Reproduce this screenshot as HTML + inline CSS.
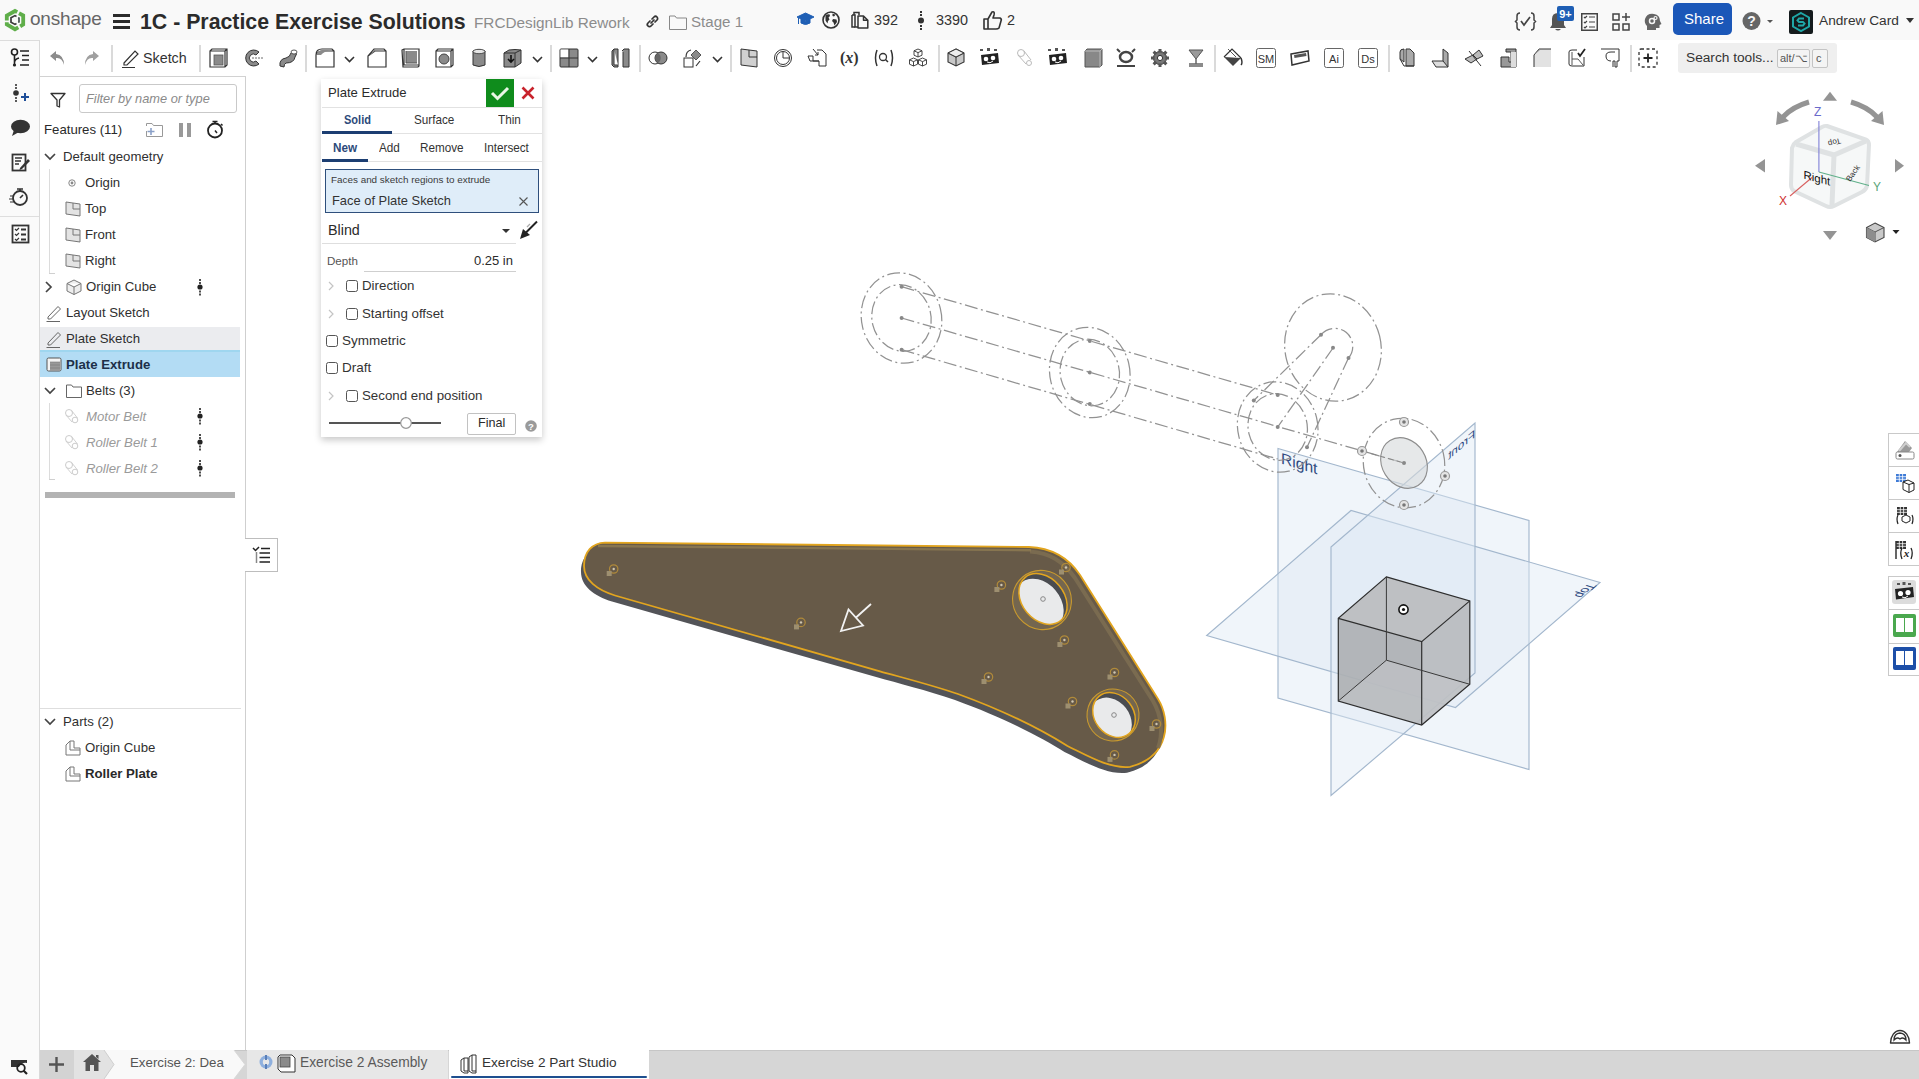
<!DOCTYPE html>
<html><head><meta charset="utf-8">
<style>
*{box-sizing:border-box;margin:0;padding:0}
html,body{width:1919px;height:1079px;overflow:hidden;background:#fff;font-family:"Liberation Sans",sans-serif;color:#333}
.a{position:absolute}
.t{position:absolute;white-space:nowrap;line-height:20px;height:20px}
svg{position:absolute;overflow:visible}
#top{left:0;top:0;width:1919px;height:40px;background:#f9f9f9}
#tb{left:40px;top:40px;width:1879px;height:37px;background:#fff}
#strip{left:0;top:40px;width:40px;height:1039px;background:#fafafa;border-right:1px solid #d9d9d9;border-top:1px solid #dcdcdc}
#panel{left:40px;top:76px;width:206px;height:974px;background:#fff;border-right:1px solid #cfcfcf}
#tabs{left:40px;top:1050px;width:1879px;height:29px;background:#d6d6d6}
.sep{position:absolute;top:47px;width:2px;height:24px;background:#d9d9d9}
.ico{position:absolute}
</style></head><body>
<div id="top" class="a"></div>
<div id="tb" class="a"></div>
<div id="strip" class="a"></div>
<div id="panel" class="a"></div>
<div id="tabs" class="a"></div>


<svg style="left:4px;top:8px" width="22" height="24" viewBox="0 0 22 24"><g fill="none" stroke="#5fae4a" stroke-width="3.8" stroke-linejoin="miter"><path d="M2.8 12.5 V7.5 L11 3 L13.2 4.2"/><path d="M15 5.3 L19.2 7.5 V16.5 L16.2 18.3"/><path d="M14.3 19.4 L11 21.2 L2.8 16.5 V14.3"/></g><path d="M12.5 8.4 L11 7.6 L7 9.8 V14.2 L11 16.4 L12.5 15.6" fill="none" stroke="#3a3a3a" stroke-width="1.7"/><path d="M14.2 9.6 L15 10 V14 L14.2 14.4" fill="none" stroke="#3a4a45" stroke-width="1.6"/></svg>
<div class="t" style="left:30px;top:9px;font-size:19px;color:#666;letter-spacing:-0.2px">onshape</div>
<svg style="left:113px;top:14px" width="17" height="15"><rect y="0" width="17" height="3" fill="#2b2b2b"/><rect y="6" width="17" height="3" fill="#2b2b2b"/><rect y="12" width="17" height="3" fill="#2b2b2b"/></svg>
<div class="t" style="left:140px;top:11px;font-size:21.3px;font-weight:700;color:#2b2b2b;height:22px;line-height:22px">1C - Practice Exercise Solutions</div>
<div class="t" style="left:474px;top:13px;font-size:15.3px;color:#8c8c8c">FRCDesignLib Rework</div>
<svg style="left:645px;top:14px" width="15" height="15" viewBox="0 0 15 15"><path d="M6 9 L9 6 M5 7 L3 9 A2.1 2.1 0 0 0 6 12 L8 10 M7 5 L9 3 A2.1 2.1 0 0 1 12 6 L10 8" fill="none" stroke="#333" stroke-width="1.7" stroke-linecap="round"/></svg>
<svg style="left:669px;top:15px" width="18" height="15" viewBox="0 0 18 15"><path d="M0.5 1 H6 L7.5 3 H17.5 V14.5 H0.5 Z" fill="none" stroke="#888" stroke-width="1"/></svg>
<div class="t" style="left:691px;top:12px;font-size:15.1px;color:#8c8c8c">Stage 1</div>

<svg style="left:797px;top:12px" width="17" height="16" viewBox="0 0 17 16"><path d="M0 5 L8.5 1 L17 5 L8.5 9 Z M4 7 V11 Q8.5 14 13 11 V7 L8.5 9.5 Z M1.5 6 V12" fill="#1f5fb5" stroke="#1f5fb5" stroke-width="1"/></svg>
<svg style="left:822px;top:11px" width="18" height="18" viewBox="0 0 18 18"><circle cx="9" cy="9" r="8" fill="none" stroke="#333" stroke-width="1.6"/><path d="M3.5 4.5 Q5 3 7.5 3.2 L8 5 L6.5 6.5 L7.5 8.5 L6 10 L5.5 12.5 L3.5 9.5 Z" fill="#333"/><path d="M10.5 2.5 L13.5 3.8 L12 5.5 L10.5 5 Z M11 8 L14.5 8.5 L15 11 L12.5 14.5 L11.5 11.5 L10 10 Z" fill="#333"/></svg>
<svg style="left:851px;top:11px" width="18" height="18" viewBox="0 0 18 18"><path d="M1 4 H4 V16 H7 M3 4 V1.5 H8 V4" fill="none" stroke="#333" stroke-width="1.5"/><path d="M7 5 H12.5 L16.8 9.3 V17 H7 Z M12.5 5 V9.3 H16.8" fill="none" stroke="#333" stroke-width="1.5" stroke-linejoin="round"/><path d="M1 4 V16 H4" fill="none" stroke="#333" stroke-width="1.5"/></svg>
<div class="t" style="left:874px;top:10px;font-size:14.4px;color:#333">392</div>
<svg style="left:917px;top:11px" width="8" height="19"><circle cx="4" cy="9.5" r="3" fill="#333"/><rect x="3" y="0" width="2" height="2" fill="#333"/><rect x="3" y="3" width="2" height="2" fill="#333"/><rect x="3" y="14" width="2" height="2" fill="#333"/><rect x="3" y="17" width="2" height="2" fill="#333"/></svg>
<div class="t" style="left:936px;top:10px;font-size:14.4px;color:#333">3390</div>
<svg style="left:983px;top:10px" width="20" height="20" viewBox="0 0 20 20"><path d="M1 9 H5 V19 H1 Z M5 9 L9 2 Q12 1 11 5 L10 8 H17 Q19 9 18 11 L16 18 Q15 19 13 19 H5" fill="none" stroke="#333" stroke-width="1.6" stroke-linejoin="round"/></svg>
<div class="t" style="left:1007px;top:10px;font-size:14.4px;color:#333">2</div>

<svg style="left:1515px;top:12px" width="21" height="19" viewBox="0 0 21 19"><path d="M5 1 Q2 1 2 4 V8 L0.5 9.5 L2 11 V15 Q2 18 5 18 M16 1 Q19 1 19 4 V8 L20.5 9.5 L19 11 V15 Q19 18 16 18" fill="none" stroke="#444" stroke-width="1.5"/><path d="M6 9 L9 13 L15 5" fill="none" stroke="#444" stroke-width="1.7"/></svg>
<svg style="left:1547px;top:5px" width="28" height="27" viewBox="0 0 28 27"><path d="M3 23 H19 L17 20 V14 Q17 8 11 8 Q5 8 5 14 V20 Z M8 24 Q11 27 14 24" fill="#555"/><rect x="10" y="1" width="17" height="15" rx="2" fill="#1f5fb5"/><text x="18.5" y="12.5" font-size="11" font-weight="700" fill="#fff" text-anchor="middle" font-family="Liberation Sans">9+</text></svg>
<svg style="left:1581px;top:13px" width="17" height="18" viewBox="0 0 17 18"><rect x="0.75" y="0.75" width="15.5" height="16.5" fill="none" stroke="#444" stroke-width="1.5"/><path d="M3 4 L4 5 L6 3 M3 9 L4 10 L6 8 M3 14 L4 15 L6 13 M8 4 H14 M8 9 H14 M8 14 H14" stroke="#444" stroke-width="1.2" fill="none"/></svg>
<svg style="left:1612px;top:13px" width="19" height="18" viewBox="0 0 19 18"><path d="M1 1 H7 V7 H1 Z M1 11 H7 V17 H1 Z M11 11 H17 V17 H11 Z M14 0 V8 M10 4 H18" fill="none" stroke="#444" stroke-width="1.5"/></svg>
<svg style="left:1644px;top:13px" width="18" height="18" viewBox="0 0 18 18"><path d="M3 17 V13 Q0 10 1 6 Q3 0 10 1 Q16 2 16 8 L17.5 11 L15.5 12 V15 L12 15 V17 Z" fill="#666"/><circle cx="8" cy="8" r="2.5" fill="none" stroke="#f6f6f6" stroke-width="1.5"/><circle cx="11.5" cy="5" r="1.5" fill="none" stroke="#f6f6f6" stroke-width="1.2"/></svg>
<div class="a" style="left:1673px;top:3px;width:59px;height:32px;background:#1b57b8;border-radius:5px"></div>
<div class="t" style="left:1684px;top:9px;font-size:15px;color:#fff">Share</div>
<svg style="left:1742px;top:11px" width="30" height="20" viewBox="0 0 30 20"><circle cx="9.5" cy="10" r="9" fill="#666"/><text x="9.5" y="15" font-size="14" font-weight="700" fill="#f6f6f6" text-anchor="middle" font-family="Liberation Sans">?</text><path d="M25 9 H31 L28 12 Z" fill="#555"/></svg>
<svg style="left:1789px;top:10px" width="24" height="24" viewBox="0 0 24 24"><rect width="24" height="24" rx="2" fill="#141a1c"/><polygon points="12,3 20,7.5 20,16.5 12,21 4,16.5 4,7.5" fill="none" stroke="#1fa6a6" stroke-width="2"/><path d="M15 8.5 H10 L8.5 10.5 L10 12 H14 L15.5 13.5 L14 15.5 H9" fill="none" stroke="#1fa6a6" stroke-width="2"/></svg>
<div class="t" style="left:1819px;top:11px;font-size:13.7px;color:#333">Andrew Card</div>
<svg style="left:1906px;top:18px" width="8" height="5"><path d="M0 0 H8 L4 5 Z" fill="#333"/></svg>


<div class="a" style="left:111px;top:45px;width:2px;height:27px;background:#dadada"></div>
<div class="a" style="left:199px;top:45px;width:2px;height:27px;background:#dadada"></div>
<div class="a" style="left:305px;top:45px;width:2px;height:27px;background:#dadada"></div>
<div class="a" style="left:550px;top:45px;width:2px;height:27px;background:#dadada"></div>
<div class="a" style="left:639px;top:45px;width:2px;height:27px;background:#dadada"></div>
<div class="a" style="left:730px;top:45px;width:2px;height:27px;background:#dadada"></div>
<div class="a" style="left:938px;top:45px;width:2px;height:27px;background:#dadada"></div>
<div class="a" style="left:1214px;top:45px;width:2px;height:27px;background:#dadada"></div>
<div class="a" style="left:1388px;top:45px;width:2px;height:27px;background:#dadada"></div>
<div class="a" style="left:1630px;top:45px;width:2px;height:27px;background:#dadada"></div>
<svg style="left:49px;top:48px" width="20" height="20" viewBox="0 0 20 20"><path d="M7 3 L1 8 L7 13 V10 Q13 9 15 17 Q15 7 7 6 Z" fill="#8c8c8c"/></svg>
<svg style="left:84px;top:48px" width="20" height="20" viewBox="0 0 20 20"><path d="M9 3 L15 8 L9 13 V10 Q3 9 1 17 Q1 7 9 6 Z" fill="#a0a0a0"/></svg>
<svg style="left:121px;top:48px" width="20" height="20" viewBox="0 0 20 20"><path d="M3 15 L14 3 L17 6 L6 17 L3 17 Z M1 19.5 H14" fill="none" stroke="#333" stroke-width="1.2"/></svg>
<div class="t" style="left:143px;top:48px;font-size:14.3px;color:#333">Sketch</div>
<svg style="left:209px;top:48px" width="20" height="20" viewBox="0 0 20 20"><path d="M1 3 L3 1 H18 V17 L16 19 H1 Z M1 3 H16 V19 M16 3 L18 1" stroke="#333" stroke-width="1.2" fill="none"/><rect x="5" y="7" width="9" height="10" fill="#8a8a8a" stroke="#555" stroke-width="0.8"/></svg>
<svg style="left:244px;top:48px" width="20" height="20" viewBox="0 0 20 20"><path d="M15 4 A8 8 0 1 0 15 16 L12 13 A4 4 0 1 1 12 7 Z" fill="#8a8a8a" stroke="#333" stroke-width="1"/><path d="M8 10 H19" stroke="#444" stroke-width="0.8" stroke-dasharray="2 1"/></svg>
<svg style="left:278px;top:48px" width="20" height="20" viewBox="0 0 20 20"><path d="M2 18 Q1 11 8 10 Q12 9 13 5 L17 3 Q20 6 17 9 Q16 15 8 15 Q6 16 6 19 Z" fill="#8a8a8a" stroke="#333" stroke-width="1"/><ellipse cx="16" cy="4" rx="3" ry="2" fill="#fff" stroke="#333" stroke-width="0.8"/></svg>
<svg style="left:315px;top:48px" width="20" height="20" viewBox="0 0 20 20"><path d="M1 19 V7 Q1 1 7 1 H17 L19 3 V19 Z M1 7 Q3 3 8 3 H19" stroke="#333" stroke-width="1.2" fill="none"/><path d="M1.5 7 Q2 3 7 2 H17 Q9 3 6 7 Z" fill="#8a8a8a"/></svg>
<svg style="left:344px;top:54px" width="12" height="10" viewBox="0 0 12 10"><path d="M1 3 L5.5 7.5 L10 3" fill="none" stroke="#333" stroke-width="1.6"/></svg>
<svg style="left:367px;top:48px" width="20" height="20" viewBox="0 0 20 20"><path d="M1 19 V8 L7 1 H17 L19 3 V19 Z M1 8 L8 3 H19" stroke="#333" stroke-width="1.2" fill="none"/><path d="M2 8 L7 2 H16 L8 3 Z" fill="#8a8a8a"/></svg>
<svg style="left:401px;top:48px" width="20" height="20" viewBox="0 0 20 20"><path d="M1 2 L3 1 H18 V18 L17 19 H2 Z M3 1 V17 H18" stroke="#333" stroke-width="1.2" fill="none"/><rect x="5" y="3" width="11" height="12" fill="#8a8a8a"/><path d="M5 3 V15 H16" stroke="#555" fill="none"/></svg>
<svg style="left:435px;top:48px" width="20" height="20" viewBox="0 0 20 20"><path d="M1 3 L3 1 H18 V17 L16 19 H1 Z M1 3 H16 V19 M16 3 L18 1" stroke="#333" stroke-width="1.2" fill="none"/><circle cx="9" cy="11" r="5" fill="#8a8a8a" stroke="#444" stroke-width="1"/></svg>
<svg style="left:472px;top:48px" width="14" height="20" viewBox="0 0 14 20"><path d="M1 3 Q7 0 13 3 V17 Q7 20 1 17 Z" fill="#8a8a8a" stroke="#333" stroke-width="1"/><ellipse cx="7" cy="3.5" rx="6" ry="2.2" fill="#e6e6e6" stroke="#333" stroke-width="0.8"/></svg>
<svg style="left:503px;top:48px" width="20" height="20" viewBox="0 0 20 20"><path d="M1 5 L6 2 Q12 1 18 2 V15 L12 19 H1 Z" fill="#8a8a8a" stroke="#333" stroke-width="1"/><path d="M1 5 H12 L18 2 M12 5 V19" stroke="#333" fill="none"/><path d="M8 7 V14 M5 11 L8 14 L11 11" stroke="#111" stroke-width="1.6" fill="none"/></svg>
<svg style="left:532px;top:54px" width="12" height="10" viewBox="0 0 12 10"><path d="M1 3 L5.5 7.5 L10 3" fill="none" stroke="#333" stroke-width="1.6"/></svg>
<svg style="left:559px;top:48px" width="20" height="20" viewBox="0 0 20 20"><rect x="1" y="1" width="18" height="18" rx="1" fill="#8a8a8a" stroke="#333" stroke-width="1"/><rect x="1.5" y="1.5" width="8" height="8" fill="#fff"/><path d="M10 1 V19 M1 10 H19" stroke="#333"/></svg>
<svg style="left:587px;top:54px" width="12" height="10" viewBox="0 0 12 10"><path d="M1 3 L5.5 7.5 L10 3" fill="none" stroke="#333" stroke-width="1.6"/></svg>
<svg style="left:611px;top:48px" width="20" height="20" viewBox="0 0 20 20"><path d="M1 3 L3 1 H7 V19 H3 L1 17 Z M11 3 L13 1 H18 V19 H12 V4" fill="#8a8a8a" stroke="#333" stroke-width="1"/><path d="M3 1 V17 H7" stroke="#333" fill="#fff"/></svg>
<svg style="left:648px;top:48px" width="20" height="20" viewBox="0 0 20 20"><circle cx="7" cy="10" r="6" fill="none" stroke="#333" stroke-width="1"/><circle cx="13" cy="10" r="6" fill="#8a8a8a" stroke="#333" stroke-width="1"/><path d="M10 5 A6 6 0 0 1 10 15 A6 6 0 0 1 10 5" fill="#666"/></svg>
<svg style="left:683px;top:48px" width="20" height="20" viewBox="0 0 20 20"><rect x="1" y="10" width="9" height="9" fill="none" stroke="#333" stroke-width="1"/><path d="M13 2 L18 7 L13 12 L8 7 Z" fill="#8a8a8a" stroke="#555"/><path d="M3 9 Q3 3 8 2 M17 13 L13 18" stroke="#333" stroke-width="1.2" fill="none"/></svg>
<svg style="left:712px;top:54px" width="12" height="10" viewBox="0 0 12 10"><path d="M1 3 L5.5 7.5 L10 3" fill="none" stroke="#333" stroke-width="1.6"/></svg>
<svg style="left:740px;top:48px" width="20" height="20" viewBox="0 0 20 20"><path d="M1 1 L17 3 V19 L1 17 Z" fill="#d0d0d0" stroke="#333" stroke-width="1"/><path d="M9 2 V9 H17" stroke="#333" fill="none"/></svg>
<svg style="left:773px;top:48px" width="20" height="20" viewBox="0 0 20 20"><circle cx="10" cy="10" r="8.5" fill="none" stroke="#333" stroke-width="1"/><circle cx="10" cy="10" r="6.5" fill="none" stroke="#333" stroke-width="1"/><path d="M10 4 V10 H16" stroke="#333" fill="none"/></svg>
<svg style="left:807px;top:48px" width="20" height="20" viewBox="0 0 20 20"><path d="M1 8 H6 V13 H12 V18 H19 V6 L15 2 H10" fill="none" stroke="#333" stroke-width="1"/><path d="M1 8 L3 13 H12 M6 1 L11 7 M11 4 V7 H8" stroke="#333" fill="none"/></svg>
<div class="t" style="left:840px;top:48px;font-size:16px;font-weight:700;color:#333;font-family:'Liberation Serif'">(<i>x</i>)</div>
<svg style="left:874px;top:48px" width="20" height="20" viewBox="0 0 20 20"><path d="M3 2 Q0 10 3 18 M17 2 Q20 10 17 18" stroke="#333" stroke-width="1.5" fill="none"/><circle cx="9" cy="9" r="3.5" stroke="#333" stroke-width="1.3" fill="none"/><path d="M11.5 11.5 L14 14" stroke="#333" stroke-width="1.5"/></svg>
<svg style="left:908px;top:48px" width="20" height="20" viewBox="0 0 20 20"><g fill="#fff" stroke="#333" stroke-width="0.9"><path d="M10 1 L14 2.8 V7.2 L10 9 L6 7.2 V2.8 Z M6 2.8 L10 4.6 L14 2.8 M10 4.6 V9"/><path d="M5.5 10 L9.5 11.8 V16.2 L5.5 18 L1.5 16.2 V11.8 Z M1.5 11.8 L5.5 13.6 L9.5 11.8 M5.5 13.6 V18"/><path d="M14.5 10 L18.5 11.8 V16.2 L14.5 18 L10.5 16.2 V11.8 Z M10.5 11.8 L14.5 13.6 L18.5 11.8 M14.5 13.6 V18"/></g></svg>
<svg style="left:947px;top:48px" width="20" height="20" viewBox="0 0 20 20"><path d="M9 1 L17 5 V14 L9 18 L1 14 V5 Z" fill="#c8c8c8" stroke="#333" stroke-width="1.1"/><path d="M1 5 L9 9 L17 5 M9 9 V18" stroke="#333" fill="none"/><path d="M1 5 L9 1 L17 5 L9 9 Z" fill="#eee" stroke="#333"/></svg>
<svg style="left:980px;top:48px" width="20" height="20" viewBox="0 0 20 20"><rect x="0" y="1" width="3" height="2" fill="#555"/><rect x="7" y="0" width="3" height="3" fill="#555"/><rect x="14" y="1" width="3" height="2" fill="#555"/><path d="M1 7 L18 5 L19 15 L2 17 Z" fill="#222"/><circle cx="6" cy="11" r="2.3" fill="#fff"/><circle cx="13" cy="10" r="2.3" fill="#fff"/><path d="M7 14 Q10 16 13 13" stroke="#fff" stroke-width="1" fill="none"/></svg>
<svg style="left:1016px;top:48px" width="20" height="20" viewBox="0 0 20 20"><circle cx="5" cy="5" r="3.5" fill="none" stroke="#bbb" stroke-width="1"/><circle cx="13" cy="15" r="2.5" fill="none" stroke="#bbb" stroke-width="1"/><path d="M2 7 L10 16 M8 3 L15 12" stroke="#bbb" fill="none"/></svg>
<svg style="left:1048px;top:48px" width="20" height="20" viewBox="0 0 20 20"><rect x="0" y="1" width="3" height="2" fill="#555"/><rect x="7" y="0" width="3" height="3" fill="#555"/><rect x="14" y="1" width="3" height="2" fill="#555"/><path d="M1 7 L18 5 L19 15 L2 17 Z" fill="#222"/><circle cx="6" cy="11" r="2.3" fill="#fff"/><circle cx="13" cy="10" r="2.3" fill="#fff"/><path d="M7 14 Q10 16 13 13" stroke="#fff" stroke-width="1" fill="none"/></svg>
<svg style="left:1084px;top:48px" width="20" height="20" viewBox="0 0 20 20"><path d="M1 3 L3 1 H18 V17 L16 19 H1 Z" fill="#888" stroke="#555" stroke-width="1"/><path d="M1 3 H16 V19 M16 3 L18 1" stroke="#bbb" fill="none"/></svg>
<svg style="left:1116px;top:48px" width="20" height="20" viewBox="0 0 20 20"><path d="M1 18 H19" stroke="#444" stroke-width="2"/><ellipse cx="10" cy="9" rx="6" ry="5" fill="none" stroke="#444" stroke-width="2.5"/><path d="M1 1 L4 4 M19 1 L16 4" stroke="#444" stroke-width="2"/></svg>
<svg style="left:1150px;top:48px" width="20" height="20" viewBox="0 0 20 20"><circle cx="10" cy="10" r="6.5" fill="#777" stroke="#333" stroke-width="1"/><path d="M10 1 V19 M1 10 H19 M3.6 3.6 L16.4 16.4 M16.4 3.6 L3.6 16.4" stroke="#555" stroke-width="3"/><circle cx="10" cy="10" r="5.5" fill="#777"/><circle cx="10" cy="10" r="2.6" fill="#fff" stroke="#333"/></svg>
<svg style="left:1188px;top:48px" width="16" height="20" viewBox="0 0 16 20"><path d="M1 2 H15 L8 11 Z" fill="#9a9a9a" stroke="#555"/><path d="M8 11 V16 M1 16 H15 M1 18 H15" stroke="#666" stroke-width="1.5"/></svg>
<svg style="left:1222px;top:48px" width="22" height="20" viewBox="0 0 22 20"><path d="M2 9 L11 18 L19 10 Z" fill="#444"/><path d="M2 9 L10 1 L19 10" stroke="#333" stroke-width="1.2" fill="none"/><path d="M6 1 L14 9" stroke="#555" stroke-width="1"/><path d="M19 10 Q21 15 19 17" stroke="#333" stroke-width="1.5" fill="none"/></svg>
<svg style="left:1256px;top:48px" width="20" height="20" viewBox="0 0 20 20"><rect x="0.5" y="0.5" width="19" height="19" rx="2" fill="none" stroke="#666" stroke-width="1"/><text x="10" y="14.5" font-size="11" fill="#333" text-anchor="middle" font-family="Liberation Sans">SM</text></svg>
<svg style="left:1324px;top:48px" width="20" height="20" viewBox="0 0 20 20"><rect x="0.5" y="0.5" width="19" height="19" rx="2" fill="none" stroke="#666" stroke-width="1"/><text x="10" y="14.5" font-size="11" fill="#333" text-anchor="middle" font-family="Liberation Sans">Ai</text></svg>
<svg style="left:1358px;top:48px" width="20" height="20" viewBox="0 0 20 20"><rect x="0.5" y="0.5" width="19" height="19" rx="2" fill="none" stroke="#666" stroke-width="1"/><text x="10" y="14.5" font-size="11" fill="#333" text-anchor="middle" font-family="Liberation Sans">Ds</text></svg>
<svg style="left:1290px;top:48px" width="20" height="20" viewBox="0 0 20 20"><path d="M1 6 L18 3 L19 13 L2 17 Z" fill="#fff" stroke="#333" stroke-width="1.5"/><path d="M4 7 L16 5 L16.5 8 L4.5 10 Z" fill="#555"/></svg>
<svg style="left:1398px;top:48px" width="18" height="20" viewBox="0 0 18 20"><path d="M2 4 Q2 1 6 1 V14 L2 11 Z M8 1 H12 L16 5 V18 H8 Z" fill="#aaa" stroke="#333" stroke-width="1"/><path d="M2 11 L6 18 H16" stroke="#333" fill="none"/></svg>
<svg style="left:1431px;top:48px" width="18" height="20" viewBox="0 0 18 20"><path d="M12 1 L17 5 V19 L12 15 Z" fill="#aaa" stroke="#333"/><path d="M1 13 H12 L17 19 H5 Z" fill="#ddd" stroke="#333"/></svg>
<svg style="left:1464px;top:48px" width="20" height="20" viewBox="0 0 20 20"><path d="M1 11 L9 7 L13 11 L7 15 Z M9 7 L15 2 L19 8 L13 11" fill="#bbb" stroke="#333"/><path d="M5 3 L17 18" stroke="#333"/></svg>
<svg style="left:1500px;top:48px" width="17" height="20" viewBox="0 0 17 20"><path d="M6 1 H16 V19 H1 V9 H9 V14 H11 V4 H6 Z" fill="#999" stroke="#333"/><path d="M11 4 H16 V19 H11 Z" fill="#ddd"/></svg>
<svg style="left:1533px;top:48px" width="20" height="20" viewBox="0 0 20 20"><path d="M1 19 V7 L6 1 H18 V19 Z" fill="#e2e2e2"/><path d="M1 19 V7 L6 1 H18" fill="none" stroke="#333"/><path d="M1 7 L6 1 H8 Z" fill="#888"/></svg>
<svg style="left:1567px;top:48px" width="20" height="20" viewBox="0 0 20 20"><path d="M2 4 Q2 2 5 2 H10 M2 4 V16 Q2 18 5 18 H17 V9" fill="none" stroke="#333"/><path d="M5 4 V17 M5 11 H11 L16 17" stroke="#555" fill="none"/><path d="M11 5 L13 8 L18 1" stroke="#222" stroke-width="1.8" fill="none"/></svg>
<svg style="left:1600px;top:48px" width="20" height="20" viewBox="0 0 20 20"><path d="M1 1 H19 V13 H17 V19 H15 V13 H13 V19 M11 13 Q6 13 6 8 Q6 4 11 4 H15" fill="none" stroke="#333" stroke-width="1"/></svg>
<svg style="left:1638px;top:48px" width="20" height="20" viewBox="0 0 20 20"><rect x="1" y="1" width="18" height="18" rx="2" fill="none" stroke="#333" stroke-width="1.3" stroke-dasharray="3 2.5"/><path d="M10 5.5 V14.5 M5.5 10 H14.5" stroke="#222" stroke-width="1.8"/></svg>
<div class="a" style="left:1678px;top:43px;width:159px;height:30px;background:#efefef;border-radius:3px"></div>
<div class="t" style="left:1686px;top:48px;font-size:13.7px;color:#333">Search tools...</div>
<div class="a" style="left:1777px;top:49px;width:33px;height:19px;border:1px solid #c4c4c4;background:#f4f4f4;border-radius:2px"></div>
<div class="t" style="left:1780px;top:49px;font-size:11px;color:#555;line-height:19px;height:19px">alt/⌥</div>
<div class="a" style="left:1812px;top:49px;width:16px;height:19px;border:1px solid #c4c4c4;background:#f4f4f4;border-radius:2px"></div>
<div class="t" style="left:1816px;top:49px;font-size:11px;color:#555;line-height:19px;height:19px">c</div>
<svg style="left:10px;top:48px" width="20" height="20" viewBox="0 0 20 20"><circle cx="4.5" cy="4" r="3" fill="none" stroke="#222" stroke-width="1.6"/><path d="M4.5 7 V17 M4.5 14 Q5 11 9 10" stroke="#222" stroke-width="1.6" fill="none"/><circle cx="4.5" cy="17" r="1.6" fill="#222"/><path d="M10 3 H19 M12 7.5 H19 M12 12 H19 M10 17 H19" stroke="#222" stroke-width="1.6"/></svg>
<svg style="left:12px;top:83px" width="18" height="20" viewBox="0 0 18 20"><circle cx="4" cy="10" r="2.8" fill="#333"/><rect x="3.2" y="1" width="1.6" height="2" fill="#333"/><rect x="3.2" y="4" width="1.6" height="2" fill="#333"/><rect x="3.2" y="14" width="1.6" height="2" fill="#333"/><rect x="3.2" y="17" width="1.6" height="2" fill="#333"/><path d="M9 14 H17 M13 10 V18" stroke="#1f4f99" stroke-width="2"/></svg>
<svg style="left:10px;top:118px" width="21" height="20" viewBox="0 0 21 20"><ellipse cx="10.5" cy="8.5" rx="9.5" ry="6.8" fill="#333"/><path d="M4 12 L2 18 L9 14 Z" fill="#333"/></svg>
<svg style="left:11px;top:153px" width="20" height="20" viewBox="0 0 20 20"><rect x="1.5" y="1.5" width="13" height="16" fill="none" stroke="#333" stroke-width="1.8"/><path d="M4 5 H11 M4 8 H10 M4 11 H8" stroke="#333" stroke-width="1.5"/><path d="M9 15 L17 6 L19 8 L11 16 L8.5 17 Z" fill="#333"/></svg>
<svg style="left:9px;top:187px" width="20" height="20" viewBox="0 0 20 20"><circle cx="11" cy="11" r="7" fill="none" stroke="#333" stroke-width="1.8"/><path d="M8 2 H14 M11 2 V4 M11 11 L14 8" stroke="#333" stroke-width="1.6"/><path d="M1 9 H5 M0 12 H4 M1 15 H5" stroke="#333" stroke-width="1.2"/></svg>
<div class="a" style="left:0;top:216px;width:39px;height:1px;background:#dedede"></div>
<svg style="left:11px;top:224px" width="20" height="20" viewBox="0 0 20 20"><rect x="1.5" y="1.5" width="16" height="17" fill="none" stroke="#333" stroke-width="1.8"/><path d="M4 5 L5.5 6.5 L8 4 M4 10 L5.5 11.5 L8 9 M4 15 L5.5 16.5 L8 14" stroke="#333" stroke-width="1.2" fill="none"/><path d="M10 5.5 H15 M10 10.5 H15 M10 15.5 H15" stroke="#333" stroke-width="1.8"/></svg>
<svg style="left:10px;top:1058px" width="19" height="17" viewBox="0 0 19 17"><path d="M1 2 H17 V5 Q12 4 9 9 H1 Z" fill="#333"/><circle cx="11" cy="10" r="3.8" fill="none" stroke="#222" stroke-width="1.8"/><path d="M13.5 12.5 L17 16" stroke="#222" stroke-width="2.2"/></svg>
<div class="a" style="left:40px;top:76px;width:206px;height:1px;background:#d2d2d2"></div>
<svg style="left:50px;top:92px" width="16" height="16" viewBox="0 0 16 16"><path d="M1 1.5 H15 L9.5 8 V15 L7 14 V8 Z" fill="none" stroke="#333" stroke-width="1.3" stroke-linejoin="round"/></svg>
<div class="a" style="left:79px;top:84px;width:158px;height:29px;border:1px solid #c9c9c9;border-radius:3px;background:#fff"></div>
<div class="t" style="left:86px;top:89px;font-size:12.8px;font-style:italic;color:#8a8a8a">Filter by name or type</div>
<div class="t" style="left:44px;top:120px;font-size:13.2px;color:#2a2a2a">Features (11)</div>
<svg style="left:145px;top:122px" width="19" height="16" viewBox="0 0 19 16"><path d="M1.5 4 V1.5 H7 L8.5 3.5 H17.5 V14.5 H1.5 V9" fill="none" stroke="#999" stroke-width="1"/><path d="M6 6 V13 M2.5 9.5 H9.5" stroke="#8aa0c8" stroke-width="1.6"/></svg>
<div class="a" style="left:179px;top:123px;width:4px;height:14px;background:#999"></div><div class="a" style="left:187px;top:123px;width:4px;height:14px;background:#999"></div>
<svg style="left:206px;top:120px" width="18" height="18" viewBox="0 0 18 18"><circle cx="9" cy="10.5" r="7" fill="none" stroke="#222" stroke-width="1.8"/><path d="M6.5 1.5 H11.5 M9 1.5 V3.5 M15 4 L16.5 5.5" stroke="#222" stroke-width="1.6"/><path d="M9 10.5 L11 13" stroke="#222" stroke-width="1.5"/></svg>
<svg style="left:44px;top:153px" width="12" height="8" viewBox="0 0 12 8"><path d="M1 1 L6 6 L11 1" fill="none" stroke="#444" stroke-width="1.7"/></svg>
<div class="t" style="left:63px;top:147px;font-size:13.2px;color:#2f2f2f;">Default geometry</div>
<div class="a" style="left:49px;top:169px;width:1px;height:104px;background:#dcdcdc"></div><div class="a" style="left:49px;top:273px;width:6px;height:1px;background:#d0d0d0"></div>
<svg style="left:68px;top:179px" width="8" height="8" viewBox="0 0 8 8"><circle cx="4" cy="4" r="3.2" fill="none" stroke="#888" stroke-width="1"/><circle cx="4" cy="4" r="1.4" fill="#888"/></svg>
<div class="t" style="left:85px;top:173px;font-size:13.2px;color:#2f2f2f;">Origin</div>
<svg style="left:65px;top:201px" width="16" height="16" viewBox="0 0 16 16"><path d="M1 1 L15 3 V15 L1 13 Z" fill="#e3e3e3" stroke="#777" stroke-width="1"/><path d="M8 2 V8 H15" stroke="#777" fill="none"/></svg>
<div class="t" style="left:85px;top:199px;font-size:13.2px;color:#2f2f2f;">Top</div>
<svg style="left:65px;top:227px" width="16" height="16" viewBox="0 0 16 16"><path d="M1 1 L15 3 V15 L1 13 Z" fill="#e3e3e3" stroke="#777" stroke-width="1"/><path d="M8 2 V8 H15" stroke="#777" fill="none"/></svg>
<div class="t" style="left:85px;top:225px;font-size:13.2px;color:#2f2f2f;">Front</div>
<svg style="left:65px;top:253px" width="16" height="16" viewBox="0 0 16 16"><path d="M1 1 L15 3 V15 L1 13 Z" fill="#e3e3e3" stroke="#777" stroke-width="1"/><path d="M8 2 V8 H15" stroke="#777" fill="none"/></svg>
<div class="t" style="left:85px;top:251px;font-size:13.2px;color:#2f2f2f;">Right</div>
<svg style="left:45px;top:281px" width="8" height="12" viewBox="0 0 8 12"><path d="M1 1 L6 6 L1 11" fill="none" stroke="#444" stroke-width="1.7"/></svg>
<svg style="left:66px;top:279px" width="16" height="17" viewBox="0 0 16 17"><path d="M8 1 L15 4.5 V12 L8 15.5 L1 12 V4.5 Z M1 4.5 L8 8 L15 4.5 M8 8 V15.5" fill="#eee" stroke="#777" stroke-width="1"/></svg>
<div class="t" style="left:86px;top:277px;font-size:13.2px;color:#2f2f2f;">Origin Cube</div>
<svg style="left:197px;top:279px" width="6" height="17" viewBox="0 0 6 17"><circle cx="3" cy="8" r="2.6" fill="#222"/><rect x="2.2" y="0" width="1.6" height="2" fill="#222"/><rect x="2.2" y="3" width="1.6" height="2" fill="#222"/><rect x="2.2" y="11.5" width="1.6" height="2" fill="#222"/><rect x="2.2" y="14.5" width="1.6" height="2" fill="#222"/></svg>
<svg style="left:46px;top:304px" width="16" height="18" viewBox="0 0 16 18"><path d="M2 13 L12 2.5 L14.5 5 L4.5 15 H2 Z M0.5 17.5 H14" fill="none" stroke="#666" stroke-width="1"/></svg>
<div class="t" style="left:66px;top:303px;font-size:13.2px;color:#2f2f2f;">Layout Sketch</div>
<div class="a" style="left:40px;top:327px;width:200px;height:23px;background:#ebecef"></div>
<div class="a" style="left:40px;top:350px;width:200px;height:2px;background:#9fd6ef"></div>
<svg style="left:46px;top:330px" width="16" height="18" viewBox="0 0 16 18"><path d="M2 13 L12 2.5 L14.5 5 L4.5 15 H2 Z M0.5 17.5 H14" fill="none" stroke="#666" stroke-width="1"/></svg>
<div class="t" style="left:66px;top:329px;font-size:13.2px;color:#2f2f2f;">Plate Sketch</div>
<div class="a" style="left:40px;top:352px;width:200px;height:25px;background:#b3dcf4"></div>
<svg style="left:46px;top:357px" width="16" height="16" viewBox="0 0 16 16"><rect x="1" y="1" width="14" height="13" rx="1.5" fill="#f4f4f4" stroke="#555" stroke-width="1"/><rect x="4" y="5" width="10" height="9" fill="#999"/><path d="M4 5 H14 M4 8 H14 M4 11 H14" stroke="#777" stroke-width="0.6"/></svg>
<div class="t" style="left:66px;top:355px;font-size:13.2px;color:#1d3049;font-weight:700">Plate Extrude</div>
<svg style="left:44px;top:387px" width="12" height="8" viewBox="0 0 12 8"><path d="M1 1 L6 6 L11 1" fill="none" stroke="#444" stroke-width="1.7"/></svg>
<svg style="left:66px;top:384px" width="16" height="15" viewBox="0 0 16 15"><path d="M0.5 1 H5.5 L7 3 H15.5 V13.5 H0.5 Z" fill="none" stroke="#666" stroke-width="1"/></svg>
<div class="t" style="left:86px;top:381px;font-size:13.2px;color:#2f2f2f;">Belts (3)</div>
<div class="a" style="left:49px;top:403px;width:1px;height:76px;background:#dcdcdc"></div><div class="a" style="left:49px;top:479px;width:6px;height:1px;background:#d0d0d0"></div>
<svg style="left:64px;top:408px" width="16" height="17" viewBox="0 0 16 17"><circle cx="5" cy="5" r="3.5" fill="none" stroke="#ccc" stroke-width="1"/><circle cx="11" cy="12" r="2.8" fill="none" stroke="#ccc" stroke-width="1"/><path d="M2 7 L8 14 M7.5 2.5 L13.5 10" stroke="#ccc" stroke-width="0.9"/></svg>
<div class="t" style="left:86px;top:407px;font-size:13.2px;color:#9a9a9a;font-style:italic">Motor Belt</div>
<svg style="left:197px;top:408px" width="6" height="17" viewBox="0 0 6 17"><circle cx="3" cy="8" r="2.6" fill="#222"/><rect x="2.2" y="0" width="1.6" height="2" fill="#222"/><rect x="2.2" y="3" width="1.6" height="2" fill="#222"/><rect x="2.2" y="11.5" width="1.6" height="2" fill="#222"/><rect x="2.2" y="14.5" width="1.6" height="2" fill="#222"/></svg>
<svg style="left:64px;top:434px" width="16" height="17" viewBox="0 0 16 17"><circle cx="5" cy="5" r="3.5" fill="none" stroke="#ccc" stroke-width="1"/><circle cx="11" cy="12" r="2.8" fill="none" stroke="#ccc" stroke-width="1"/><path d="M2 7 L8 14 M7.5 2.5 L13.5 10" stroke="#ccc" stroke-width="0.9"/></svg>
<div class="t" style="left:86px;top:433px;font-size:13.2px;color:#9a9a9a;font-style:italic">Roller Belt 1</div>
<svg style="left:197px;top:434px" width="6" height="17" viewBox="0 0 6 17"><circle cx="3" cy="8" r="2.6" fill="#222"/><rect x="2.2" y="0" width="1.6" height="2" fill="#222"/><rect x="2.2" y="3" width="1.6" height="2" fill="#222"/><rect x="2.2" y="11.5" width="1.6" height="2" fill="#222"/><rect x="2.2" y="14.5" width="1.6" height="2" fill="#222"/></svg>
<svg style="left:64px;top:460px" width="16" height="17" viewBox="0 0 16 17"><circle cx="5" cy="5" r="3.5" fill="none" stroke="#ccc" stroke-width="1"/><circle cx="11" cy="12" r="2.8" fill="none" stroke="#ccc" stroke-width="1"/><path d="M2 7 L8 14 M7.5 2.5 L13.5 10" stroke="#ccc" stroke-width="0.9"/></svg>
<div class="t" style="left:86px;top:459px;font-size:13.2px;color:#9a9a9a;font-style:italic">Roller Belt 2</div>
<svg style="left:197px;top:460px" width="6" height="17" viewBox="0 0 6 17"><circle cx="3" cy="8" r="2.6" fill="#222"/><rect x="2.2" y="0" width="1.6" height="2" fill="#222"/><rect x="2.2" y="3" width="1.6" height="2" fill="#222"/><rect x="2.2" y="11.5" width="1.6" height="2" fill="#222"/><rect x="2.2" y="14.5" width="1.6" height="2" fill="#222"/></svg>
<div class="a" style="left:45px;top:492px;width:190px;height:6px;background:#b3b3b3"></div>
<div class="a" style="left:40px;top:708px;width:201px;height:1px;background:#dedede"></div>
<svg style="left:44px;top:718px" width="12" height="8" viewBox="0 0 12 8"><path d="M1 1 L6 6 L11 1" fill="none" stroke="#444" stroke-width="1.7"/></svg>
<div class="t" style="left:63px;top:712px;font-size:13.2px;color:#2f2f2f;">Parts (2)</div>
<svg style="left:65px;top:740px" width="16" height="16" viewBox="0 0 16 16"><path d="M5 1 H9 V8 H15 V15 H1 V5 Z M5 1 V10 H15 M1 5 L3 3" fill="none" stroke="#777" stroke-width="1"/></svg>
<div class="t" style="left:85px;top:738px;font-size:13.2px;color:#2f2f2f;">Origin Cube</div>
<svg style="left:65px;top:766px" width="16" height="16" viewBox="0 0 16 16"><path d="M5 1 H9 V8 H15 V15 H1 V5 Z M5 1 V10 H15 M1 5 L3 3" fill="none" stroke="#777" stroke-width="1"/></svg>
<div class="t" style="left:85px;top:764px;font-size:13.2px;color:#2a2a2a;font-weight:700">Roller Plate</div>
<svg style="left:0;top:0" width="1919" height="1079" viewBox="0 0 1919 1079">
<polygon points="1278,448.5 1529,520.5 1529,769.5 1278,698" fill="#dde8f3" fill-opacity="0.45" stroke="#a3b7cd" stroke-width="1.15"/>
<polygon points="1206.7,635.5 1351,510.5 1600,582.5 1455.5,707.5" fill="#dde8f3" fill-opacity="0.45" stroke="#a3b7cd" stroke-width="1.15"/>
<polygon points="1331,547 1475,423 1475,673 1331,795.5" fill="#dde8f3" fill-opacity="0.45" stroke="#a3b7cd" stroke-width="1.15"/>
<text x="0" y="0" font-family="Liberation Sans" font-size="15.6" fill="#2f4a80" transform="translate(1281,463.6) skewY(16.4)">Right</text>
<text x="0" y="0" font-family="Liberation Sans" font-size="11.5" fill="#2f4a80" transform="translate(1475,437) skewY(-40.7) scale(-1,1)">Front</text>
<text x="0" y="0" font-family="Liberation Sans" font-size="12.5" fill="#2f4a80" transform="matrix(-0.76,0.65,-0.96,-0.28,1589,583)">Top</text>
<polygon points="1338.3,618.3 1421.7,641.6 1421.7,725 1338.3,701" fill="#a9abae" fill-opacity="0.85"/>
<polygon points="1421.7,641.6 1469.8,600.9 1469.8,684.3 1421.7,725" fill="#b5b7ba" fill-opacity="0.85"/>
<polygon points="1386.4,576.8 1469.8,600.9 1421.7,641.6 1338.3,618.3" fill="#b9bbbe" fill-opacity="0.9"/>
<polygon points="1338.3,701 1386.4,660.2 1469.8,684.3 1421.7,725" fill="#c6c8cb" fill-opacity="0.5"/>
<polygon points="1386.4,576.8 1469.8,600.9 1469.8,684.3 1421.7,725 1338.3,701 1338.3,618.3" stroke="#2e2e2e" stroke-width="1.2" fill="none"/>
<polyline points="1338.3,618.3 1421.7,641.6 1469.8,600.9" stroke="#2e2e2e" stroke-width="1.2" fill="none"/><line x1="1421.7" y1="641.6" x2="1421.7" y2="725" stroke="#2e2e2e" stroke-width="1.2" fill="none"/>
<polyline points="1386.4,576.8 1386.4,660.2 1338.3,701" stroke="#3a3a3a" stroke-width="1" fill="none"/><line x1="1386.4" y1="660.2" x2="1469.8" y2="684.3" stroke="#3a3a3a" stroke-width="1"/>
<circle cx="1403.5" cy="609.5" r="4.6" fill="#fff" stroke="#111" stroke-width="1.6"/><circle cx="1403.5" cy="609.5" r="1.6" fill="#111"/>
<ellipse cx="901.5" cy="318" rx="40" ry="45.5" transform="rotate(-14 901.5 318)" fill="none" stroke="#929292" stroke-width="1.25" stroke-dasharray="13 3.5 2 3.5"/>
<ellipse cx="901.5" cy="318" rx="29.5" ry="33.5" transform="rotate(-14 901.5 318)" fill="none" stroke="#929292" stroke-width="1.25" stroke-dasharray="13 3.5 2 3.5"/>
<ellipse cx="1089.8" cy="372.5" rx="40" ry="45.5" transform="rotate(-14 1089.8 372.5)" fill="none" stroke="#929292" stroke-width="1.25" stroke-dasharray="13 3.5 2 3.5"/>
<ellipse cx="1089.8" cy="372.5" rx="29.5" ry="33.5" transform="rotate(-14 1089.8 372.5)" fill="none" stroke="#929292" stroke-width="1.25" stroke-dasharray="13 3.5 2 3.5"/>
<ellipse cx="1277.7" cy="427" rx="40" ry="45.5" transform="rotate(-14 1277.7 427)" fill="none" stroke="#929292" stroke-width="1.25" stroke-dasharray="13 3.5 2 3.5"/>
<ellipse cx="1277.7" cy="427" rx="29.5" ry="33.5" transform="rotate(-14 1277.7 427)" fill="none" stroke="#929292" stroke-width="1.25" stroke-dasharray="13 3.5 2 3.5"/>
<ellipse cx="1333" cy="347.5" rx="48" ry="54" transform="rotate(-14 1333 347.5)" fill="none" stroke="#929292" stroke-width="1.25" stroke-dasharray="13 3.5 2 3.5"/>
<path d="M1321 334.7 A16 16 0 0 1 1348.5 358" fill="none" stroke="#929292" stroke-width="1.25" stroke-dasharray="13 3.5 2 3.5"/>
<line x1="901.6" y1="286.7" x2="1277.7" y2="395" fill="none" stroke="#929292" stroke-width="1.25" stroke-dasharray="13 3.5 2 3.5"/>
<line x1="901.6" y1="318" x2="1404" y2="463" fill="none" stroke="#929292" stroke-width="1.25" stroke-dasharray="13 3.5 2 3.5"/>
<line x1="901.6" y1="349.7" x2="1277.7" y2="459" fill="none" stroke="#929292" stroke-width="1.25" stroke-dasharray="13 3.5 2 3.5"/>
<line x1="1321" y1="334.7" x2="1253.8" y2="400.5" fill="none" stroke="#929292" stroke-width="1.25" stroke-dasharray="13 3.5 2 3.5"/>
<line x1="1348.5" y1="358" x2="1307" y2="447.3" fill="none" stroke="#929292" stroke-width="1.25" stroke-dasharray="13 3.5 2 3.5"/>
<line x1="1333" y1="348" x2="1277.7" y2="427" fill="none" stroke="#929292" stroke-width="1.25" stroke-dasharray="13 3.5 2 3.5"/>
<circle cx="901.6" cy="286.7" r="2" fill="#888"/>
<circle cx="901.6" cy="318" r="2" fill="#888"/>
<circle cx="901.6" cy="349.7" r="2" fill="#888"/>
<circle cx="1089.8" cy="341" r="2" fill="#888"/>
<circle cx="1089.8" cy="372.5" r="2" fill="#888"/>
<circle cx="1089.8" cy="404" r="2" fill="#888"/>
<circle cx="1277.7" cy="427" r="2" fill="#888"/>
<circle cx="1253.8" cy="400.5" r="2" fill="#888"/>
<circle cx="1307" cy="447.3" r="2" fill="#888"/>
<circle cx="1333" cy="347.7" r="2" fill="#888"/>
<circle cx="1321" cy="334.7" r="2" fill="#888"/>
<circle cx="1348.5" cy="358" r="2" fill="#888"/>
<circle cx="1277.7" cy="395" r="2" fill="#888"/>
<ellipse cx="1404" cy="463" rx="40.5" ry="45" transform="rotate(-14 1404 463)" fill="none" stroke="#929292" stroke-width="1.25" stroke-dasharray="13 3.5 2 3.5"/>
<ellipse cx="1404" cy="463" rx="22" ry="26.5" transform="rotate(-32 1404 463)" fill="#d6d8da" fill-opacity="0.6" stroke="#8d8d8d" stroke-width="1.1"/>
<line x1="1362" y1="451" x2="1404" y2="463" stroke="#888" stroke-width="1" stroke-dasharray="6 3"/><circle cx="1404" cy="463" r="2" fill="#888"/>
<circle cx="1404" cy="422" r="4.5" fill="#e4e4e4" stroke="#9a9a9a" stroke-width="1.2"/><circle cx="1404" cy="422" r="1.8" fill="#777"/>
<circle cx="1362" cy="451" r="4.5" fill="#e4e4e4" stroke="#9a9a9a" stroke-width="1.2"/><circle cx="1362" cy="451" r="1.8" fill="#777"/>
<circle cx="1445" cy="476" r="4.5" fill="#e4e4e4" stroke="#9a9a9a" stroke-width="1.2"/><circle cx="1445" cy="476" r="1.8" fill="#777"/>
<circle cx="1404" cy="505" r="4.5" fill="#e4e4e4" stroke="#9a9a9a" stroke-width="1.2"/><circle cx="1404" cy="505" r="1.8" fill="#777"/>
<path d="M605 542.6 L1029 547 C1052 548 1068 557 1080 575 L1158 699 C1171 720 1170 757 1130 766.8 C1110 769 1090 757 1067.5 746 C1045 732 1010 713 958 694 C930 684.5 900 677 880 671.3 L615 595.5 C597 590 584 580 584 566 C584 552 592 543 605 542.6 Z" fill="#535458" transform="translate(-3,6)"/>
<path d="M605 542.6 L1029 547 C1052 548 1068 557 1080 575 L1158 699 C1171 720 1170 757 1130 766.8 C1110 769 1090 757 1067.5 746 C1045 732 1010 713 958 694 C930 684.5 900 677 880 671.3 L615 595.5 C597 590 584 580 584 566 C584 552 592 543 605 542.6 Z" fill="#675a48" stroke="#e2a51f" stroke-width="1.8"/>
<path d="M1030 551.5 C1050 553 1063 561 1075 578 L1153 701 C1162 716 1163 735 1158 748" fill="none" stroke="#7c6d51" stroke-width="4" opacity="0.9"/><path d="M598 546 L1031 550.3" fill="none" stroke="#8d7a52" stroke-width="2.4" opacity="0.85"/>
<defs>
<clipPath id="h1"><ellipse cx="1043" cy="599" rx="21" ry="28" transform="rotate(-40 1043 599)"/></clipPath>
<clipPath id="h2"><ellipse cx="1114" cy="715" rx="19.5" ry="24" transform="rotate(-38 1114 715)"/></clipPath>
</defs>
<ellipse cx="1042" cy="600" rx="29" ry="30" transform="rotate(-40 1042 600)" fill="#74664f" stroke="#c99a2e" stroke-width="1.1"/>
<ellipse cx="1043" cy="599" rx="21" ry="28" transform="rotate(-40 1043 599)" fill="#4a4c50"/>
<g clip-path="url(#h1)"><ellipse cx="1039.5" cy="604" rx="21" ry="28" transform="rotate(-40 1039.5 604)" fill="#e9eaeb"/></g>
<ellipse cx="1043" cy="599" rx="21" ry="28" transform="rotate(-40 1043 599)" fill="none" stroke="#e2a51f" stroke-width="1.5"/>
<circle cx="1043" cy="599" r="2.3" fill="none" stroke="#888" stroke-width="1"/>
<ellipse cx="1113" cy="715" rx="26" ry="26" transform="rotate(-38 1113 715)" fill="#74664f" stroke="#c99a2e" stroke-width="1.1"/>
<ellipse cx="1114" cy="715" rx="19.5" ry="24" transform="rotate(-38 1114 715)" fill="#4a4c50"/>
<g clip-path="url(#h2)"><ellipse cx="1110.5" cy="720" rx="19.5" ry="24" transform="rotate(-38 1110.5 720)" fill="#e9eaeb"/></g>
<ellipse cx="1114" cy="715" rx="19.5" ry="24" transform="rotate(-38 1114 715)" fill="none" stroke="#e2a51f" stroke-width="1.5"/>
<circle cx="1114" cy="715" r="2.3" fill="none" stroke="#888" stroke-width="1"/>
<circle cx="613.7" cy="569" r="4.2" fill="none" stroke="#b08a3a" stroke-width="1.2"/><rect x="606.7" y="571" width="5" height="5" fill="#9d8f70"/><circle cx="613.7" cy="569" r="1.2" fill="#cfc6b0"/>
<circle cx="801" cy="622.4" r="4.2" fill="none" stroke="#b08a3a" stroke-width="1.2"/><rect x="794" y="624.4" width="5" height="5" fill="#9d8f70"/><circle cx="801" cy="622.4" r="1.2" fill="#cfc6b0"/>
<circle cx="1001.4" cy="585" r="4.2" fill="none" stroke="#b08a3a" stroke-width="1.2"/><rect x="994.4" y="587" width="5" height="5" fill="#9d8f70"/><circle cx="1001.4" cy="585" r="1.2" fill="#cfc6b0"/>
<circle cx="1066" cy="567.5" r="4.2" fill="none" stroke="#b08a3a" stroke-width="1.2"/><rect x="1059" y="569.5" width="5" height="5" fill="#9d8f70"/><circle cx="1066" cy="567.5" r="1.2" fill="#cfc6b0"/>
<circle cx="1064.4" cy="640" r="4.2" fill="none" stroke="#b08a3a" stroke-width="1.2"/><rect x="1057.4" y="642" width="5" height="5" fill="#9d8f70"/><circle cx="1064.4" cy="640" r="1.2" fill="#cfc6b0"/>
<circle cx="988.5" cy="677" r="4.2" fill="none" stroke="#b08a3a" stroke-width="1.2"/><rect x="981.5" y="679" width="5" height="5" fill="#9d8f70"/><circle cx="988.5" cy="677" r="1.2" fill="#cfc6b0"/>
<circle cx="1114.5" cy="672.5" r="4.2" fill="none" stroke="#b08a3a" stroke-width="1.2"/><rect x="1107.5" y="674.5" width="5" height="5" fill="#9d8f70"/><circle cx="1114.5" cy="672.5" r="1.2" fill="#cfc6b0"/>
<circle cx="1072.5" cy="701.5" r="4.2" fill="none" stroke="#b08a3a" stroke-width="1.2"/><rect x="1065.5" y="703.5" width="5" height="5" fill="#9d8f70"/><circle cx="1072.5" cy="701.5" r="1.2" fill="#cfc6b0"/>
<circle cx="1156.5" cy="724" r="4.2" fill="none" stroke="#b08a3a" stroke-width="1.2"/><rect x="1149.5" y="726" width="5" height="5" fill="#9d8f70"/><circle cx="1156.5" cy="724" r="1.2" fill="#cfc6b0"/>
<circle cx="1114.5" cy="754.9" r="4.2" fill="none" stroke="#b08a3a" stroke-width="1.2"/><rect x="1107.5" y="756.9" width="5" height="5" fill="#9d8f70"/><circle cx="1114.5" cy="754.9" r="1.2" fill="#cfc6b0"/>
<path d="M841 631 L848.5 609.5 L863 625.5 Z M856 617.5 L871 604" fill="none" stroke="#f2f2f2" stroke-width="1.8" stroke-linejoin="miter"/>
<polygon points="1830,91.7 1823,100.8 1837,100.8" fill="#949494"/>
<polygon points="1755,165.8 1765,159 1765,172.5" fill="#949494"/>
<polygon points="1904,165.8 1895,159 1895,172.5" fill="#949494"/>
<polygon points="1830,240 1823,231 1837,231" fill="#949494"/>
<path d="M1809 102 Q1792 107 1783 117" fill="none" stroke="#949494" stroke-width="5"/><polygon points="1776,125 1777.5,111 1789,121" fill="#949494"/>
<path d="M1851 102 Q1868 107 1877 117" fill="none" stroke="#949494" stroke-width="5"/><polygon points="1884,125 1882.5,111 1871,121" fill="#949494"/>
<path d="M1827 126 L1866 139.5 Q1869 141 1869 145 L1867 186 Q1866 190 1862 192 L1834 206 Q1830 208 1826 206 L1794 191 Q1791 189 1791 185 L1792 148 Q1793 144 1796 142 L1822 127 Q1825 125.5 1827 126 Z" fill="#f6f8f8" stroke="#dfe2e3" stroke-width="4"/>
<path d="M1796 144 L1834 155 L1866 141 M1834 155 L1832 205" fill="none" stroke="#dfe2e3" stroke-width="5"/>
<line x1="1818.9" y1="121" x2="1818.9" y2="172" stroke="#8080d8" stroke-width="1.1"/>
<line x1="1812" y1="177.5" x2="1790" y2="196" stroke="#d86060" stroke-width="1.1"/>
<line x1="1818.9" y1="172" x2="1869" y2="185.5" stroke="#60b08a" stroke-width="1.1"/>
<text x="1814" y="116" font-family="Liberation Sans" font-size="12" fill="#6a6acb">Z</text>
<text x="1779" y="205" font-family="Liberation Sans" font-size="12" fill="#d03030">X</text>
<text x="1873" y="191" font-family="Liberation Sans" font-size="12" fill="#5aa57a">Y</text>
<text x="0" y="0" font-family="Liberation Sans" font-size="11.5" fill="#111" transform="translate(1803.5,178.5) skewY(15)">Right</text>
<text x="0" y="0" font-family="Liberation Sans" font-size="8" fill="#333" transform="translate(1840,138) rotate(165)">Top</text>
<text x="0" y="0" font-family="Liberation Sans" font-size="8" fill="#333" transform="translate(1850,182) rotate(-55)">Back</text>
<path d="M1875 223 L1884 227.5 V237.5 L1875 242 L1866.5 237.5 V227.5 Z" fill="#c9c9c9" stroke="#444" stroke-width="1.1"/><path d="M1866.5 227.5 L1875 232 L1884 227.5 M1875 232 V242" fill="none" stroke="#444" stroke-width="0.9"/><path d="M1866.5 227.5 L1875 232 V242 L1866.5 237.5 Z" fill="#8d8d8d"/>
<polygon points="1892.5,230 1899.5,230 1896,234" fill="#222"/>
</svg>
<div class="a" style="left:245px;top:538px;width:33px;height:34px;background:#fff;border:1px solid #bdbdbd;border-left:none"></div>
<svg style="left:252px;top:546px" width="19" height="18" viewBox="0 0 19 18"><path d="M1 2 L3.5 4.5 L7 1" fill="none" stroke="#222" stroke-width="1.5"/><path d="M9 2.5 H18 M7.5 7 H18 M7.5 11.5 H18 M7.5 16 H18" stroke="#222" stroke-width="1.4"/><path d="M4.5 6 V17" stroke="#888" stroke-width="1.5"/></svg>
<div class="a" style="left:1888px;top:433px;width:32px;height:133px;border:1px solid #c9c9c9;border-right:none;background:#fff"></div>
<div class="a" style="left:1888px;top:466px;width:31px;height:1px;background:#c9c9c9"></div>
<div class="a" style="left:1888px;top:499px;width:31px;height:1px;background:#c9c9c9"></div>
<div class="a" style="left:1888px;top:532px;width:31px;height:1px;background:#c9c9c9"></div>
<div class="a" style="left:1888px;top:576px;width:32px;height:100px;border:1px solid #c9c9c9;border-right:none;background:#fff"></div>
<div class="a" style="left:1888px;top:609px;width:31px;height:1px;background:#c9c9c9"></div>
<div class="a" style="left:1888px;top:643px;width:31px;height:1px;background:#c9c9c9"></div>
<svg style="left:1895px;top:440px" width="20" height="20" viewBox="0 0 20 20"><path d="M2 12 L10 1 L17 8 L14 12 Z" fill="#9a9a9a"/><path d="M4 11 L11 3 L15 7" fill="none" stroke="#cfcfcf" stroke-width="2"/><rect x="1" y="12" width="18" height="7" rx="1.5" fill="#fff" stroke="#888" stroke-width="1"/><circle cx="5" cy="15.5" r="1.5" fill="#555"/></svg>
<svg style="left:1895px;top:473px" width="20" height="20" viewBox="0 0 20 20"><rect x="1" y="1" width="10" height="8" fill="#3d7ad6"/><path d="M1 3.7 H11 M1 6.3 H11 M4.3 1 V9 M7.6 1 V9" stroke="#fff" stroke-width="0.8"/><path d="M8 9 L13 7 L19 10 V17 L14 19.5 L8 16.5 Z M8 9 L14 11.5 L19 10 M14 11.5 V19.5" fill="#fff" stroke="#222" stroke-width="1"/></svg>
<svg style="left:1895px;top:506px" width="20" height="20" viewBox="0 0 20 20"><rect x="2" y="1" width="10" height="8" fill="#333"/><path d="M2 3.7 H12 M2 6.3 H12 M5.3 1 V9 M8.6 1 V9" stroke="#fff" stroke-width="0.8"/><path d="M7 11 L11 9 L15 11 V15 L11 17 L7 15 Z" fill="#fff" stroke="#222" stroke-width="1"/><path d="M3 9 Q1 13 3 18 M17 9 Q19 13 17 18" fill="none" stroke="#222" stroke-width="1.2"/></svg>
<svg style="left:1895px;top:540px" width="20" height="20" viewBox="0 0 20 20"><rect x="1" y="1" width="10" height="8" fill="#333"/><path d="M1 3.7 H11 M1 6.3 H11 M4.3 1 V9 M7.6 1 V9" stroke="#fff" stroke-width="0.8"/><path d="M1 1 V19" stroke="#333" stroke-width="1.5"/><text x="11.5" y="17" font-family="Liberation Serif" font-style="italic" font-weight="700" font-size="11" fill="#222" text-anchor="middle">x</text><path d="M7 8 Q4.5 13 7 19 M16 8 Q18.5 13 16 19" fill="none" stroke="#222" stroke-width="1.3"/></svg>
<svg style="left:1892px;top:580px" width="24" height="24" viewBox="0 0 24 24"><rect x="0" y="0" width="24" height="24" rx="3" fill="#dcdcdc"/><rect x="5" y="3" width="3" height="2" fill="#555"/><rect x="10.5" y="2" width="3" height="3" fill="#555"/><rect x="16" y="3" width="3" height="2" fill="#555"/><path d="M3 9 L21 7 L22 17 L4 19.5 Z" fill="#222"/><circle cx="8.5" cy="13.5" r="2.6" fill="#fff"/><circle cx="16" cy="12.5" r="2.6" fill="#fff"/><path d="M10 17 Q13 19 16 16" stroke="#fff" fill="none"/></svg>
<svg style="left:1893px;top:614px" width="23" height="23" viewBox="0 0 23 23"><rect x="0" y="0" width="23" height="23" rx="2" fill="#4aa84e"/><rect x="3" y="4" width="8" height="14" fill="#fff"/><rect x="12" y="4" width="8" height="14" fill="#fff"/></svg>
<svg style="left:1893px;top:647px" width="23" height="23" viewBox="0 0 23 23"><rect x="0" y="0" width="23" height="23" rx="2" fill="#1d4fa8"/><rect x="3" y="4" width="8" height="14" fill="#fff"/><rect x="12" y="4" width="8" height="14" fill="#fff"/></svg>
<div class="a" style="left:321px;top:79px;width:221px;height:358px;background:#fff;box-shadow:0 3px 7px rgba(0,0,0,0.22)"></div>
<div class="t" style="left:328px;top:83px;font-size:13.1px;color:#2b2b2b;">Plate Extrude</div>
<div class="a" style="left:486px;top:79px;width:28px;height:28px;background:#0f8c1c"></div>
<svg style="left:490px;top:85px" width="20" height="16" viewBox="0 0 20 16"><path d="M2 8 L7.5 13.5 L18 3" fill="none" stroke="#e9f7e6" stroke-width="3"/></svg>
<svg style="left:521px;top:86px" width="14" height="14" viewBox="0 0 14 14"><path d="M1.5 1.5 L12.5 12.5 M12.5 1.5 L1.5 12.5" stroke="#c8232c" stroke-width="2.6"/></svg>
<div class="a" style="left:322px;top:107px;width:220px;height:1px;background:#e2e2e2"></div>
<div class="t" style="left:344px;top:110px;font-size:13px;color:#2d4a7a;font-weight:700;transform:scaleX(0.85);transform-origin:0 0;">Solid</div>
<div class="t" style="left:414px;top:110px;font-size:13px;color:#333;transform:scaleX(0.9);transform-origin:0 0;">Surface</div>
<div class="t" style="left:498px;top:110px;font-size:13px;color:#333;transform:scaleX(0.9);transform-origin:0 0;">Thin</div>
<div class="a" style="left:322px;top:133px;width:220px;height:1px;background:#e2e2e2"></div>
<div class="a" style="left:322px;top:131px;width:70px;height:3px;background:#1c3e72"></div>
<div class="t" style="left:333px;top:138px;font-size:13px;color:#2d4a7a;font-weight:700;transform:scaleX(0.9);transform-origin:0 0;">New</div>
<div class="t" style="left:379px;top:138px;font-size:13px;color:#333;transform:scaleX(0.9);transform-origin:0 0;">Add</div>
<div class="t" style="left:420px;top:138px;font-size:13px;color:#333;transform:scaleX(0.9);transform-origin:0 0;">Remove</div>
<div class="t" style="left:484px;top:138px;font-size:13px;color:#333;transform:scaleX(0.9);transform-origin:0 0;">Intersect</div>
<div class="a" style="left:322px;top:161px;width:220px;height:1px;background:#e2e2e2"></div>
<div class="a" style="left:322px;top:159px;width:46px;height:3px;background:#1c3e72"></div>
<div class="a" style="left:325px;top:169px;width:214px;height:44px;background:#dfedf9;border:1px solid #2e4f7c"></div>
<div class="t" style="left:331px;top:170px;font-size:9.9px;color:#3a3a3a;">Faces and sketch regions to extrude</div>
<div class="t" style="left:332px;top:191px;font-size:12.9px;color:#333;">Face of Plate Sketch</div>
<svg style="left:519px;top:197px" width="9" height="9" viewBox="0 0 9 9"><path d="M0.5 0.5 L8.5 8.5 M8.5 0.5 L0.5 8.5" stroke="#555" stroke-width="1.1"/></svg>
<div class="t" style="left:328px;top:220px;font-size:14.3px;color:#2b2b2b;">Blind</div>
<svg style="left:502px;top:229px" width="8" height="4" viewBox="0 0 8 4"><path d="M0 0 H8 L4 4 Z" fill="#333"/></svg>
<div class="a" style="left:322px;top:243px;width:194px;height:1px;background:#dedede"></div>
<svg style="left:519px;top:220px" width="20" height="20" viewBox="0 0 20 20"><path d="M18 1.5 L7 12.5" stroke="#222" stroke-width="2"/><path d="M1 19 L4 9 L11 15 Z" fill="#222"/><path d="M8 7 L11 4" stroke="#aaa" stroke-width="1.2"/></svg>
<div class="t" style="left:327px;top:251px;font-size:11.6px;color:#555;">Depth</div>
<div class="t" style="left:415px;top:251px;width:98px;text-align:right;font-size:13px;color:#2b2b2b">0.25 in</div>
<div class="a" style="left:364px;top:271px;width:152px;height:1px;background:#cfcfcf"></div>
<svg style="left:328px;top:281px" width="7" height="10" viewBox="0 0 7 10"><path d="M1 1 L5 5 L1 9" fill="none" stroke="#c4c4c4" stroke-width="1.2"/></svg>
<svg style="left:346px;top:280px" width="12" height="12" viewBox="0 0 12 12"><rect x="0.5" y="0.5" width="11" height="11" rx="2" fill="#fff" stroke="#555" stroke-width="1"/></svg>
<div class="t" style="left:362px;top:276px;font-size:13.3px;color:#333;">Direction</div>
<svg style="left:328px;top:309px" width="7" height="10" viewBox="0 0 7 10"><path d="M1 1 L5 5 L1 9" fill="none" stroke="#c4c4c4" stroke-width="1.2"/></svg>
<svg style="left:346px;top:308px" width="12" height="12" viewBox="0 0 12 12"><rect x="0.5" y="0.5" width="11" height="11" rx="2" fill="#fff" stroke="#555" stroke-width="1"/></svg>
<div class="t" style="left:362px;top:304px;font-size:13.3px;color:#333;">Starting offset</div>
<svg style="left:328px;top:391px" width="7" height="10" viewBox="0 0 7 10"><path d="M1 1 L5 5 L1 9" fill="none" stroke="#c4c4c4" stroke-width="1.2"/></svg>
<svg style="left:346px;top:390px" width="12" height="12" viewBox="0 0 12 12"><rect x="0.5" y="0.5" width="11" height="11" rx="2" fill="#fff" stroke="#555" stroke-width="1"/></svg>
<div class="t" style="left:362px;top:386px;font-size:13.3px;color:#333;">Second end position</div>
<svg style="left:326px;top:335px" width="12" height="12" viewBox="0 0 12 12"><rect x="0.5" y="0.5" width="11" height="11" rx="2" fill="#fff" stroke="#555" stroke-width="1"/></svg>
<div class="t" style="left:342px;top:331px;font-size:13.5px;color:#333;">Symmetric</div>
<svg style="left:326px;top:362px" width="12" height="12" viewBox="0 0 12 12"><rect x="0.5" y="0.5" width="11" height="11" rx="2" fill="#fff" stroke="#555" stroke-width="1"/></svg>
<div class="t" style="left:342px;top:358px;font-size:13.5px;color:#333;">Draft</div>
<div class="a" style="left:329px;top:422px;width:112px;height:2px;background:#555"></div>
<svg style="left:400px;top:417px" width="12" height="12" viewBox="0 0 12 12"><circle cx="6" cy="6" r="5.3" fill="#fff" stroke="#999" stroke-width="1.2"/></svg>
<div class="a" style="left:467px;top:413px;width:49px;height:22px;border:1px solid #c2c2c2;border-radius:2px;background:#fff"></div>
<div class="t" style="left:478px;top:413px;font-size:12.6px;color:#2b2b2b;">Final</div>
<svg style="left:525px;top:420px" width="12" height="12" viewBox="0 0 12 12"><circle cx="6" cy="6" r="5.8" fill="#9a9a9a"/><text x="6" y="9.8" font-size="9.5" font-weight="700" fill="#fff" text-anchor="middle" font-family="Liberation Sans">?</text></svg>
<div class="a" style="left:40px;top:1050px;width:1879px;height:1px;background:#c6c6c6"></div>
<div class="a" style="left:40px;top:1050px;width:34px;height:29px;background:#d3d3d3"></div>
<svg style="left:49px;top:1057px" width="15" height="15" viewBox="0 0 15 15"><path d="M7.5 0 V15 M0 7.5 H15" stroke="#555" stroke-width="2.4"/></svg>
<div class="a" style="left:74px;top:1050px;width:40px;height:29px;background:#e2e2e2"></div>
<svg style="left:83px;top:1053px" width="18" height="18" viewBox="0 0 18 18"><path d="M0 9 L9 1 L18 9 H15.5 V18 H11 V12 H7 V18 H2.5 V9 Z M13 2 H15.5 V6 L13 4 Z" fill="#555"/></svg>
<svg style="left:104px;top:1050px" width="142" height="29" viewBox="0 0 142 29"><path d="M0 0 H130 L141 14.5 L130 29 H0 L10 14.5 Z" fill="#f9f9f9"/><path d="M0 0 L10 14.5 L0 29" fill="none" stroke="#cfcfcf" stroke-width="1"/><path d="M130 0 L141 14.5 L130 29" fill="none" stroke="#d8d8d8" stroke-width="1"/></svg>
<div class="t" style="left:130px;top:1053px;font-size:13.3px;color:#555;">Exercise 2: Dea</div>
<div class="a" style="left:247px;top:1050px;width:201px;height:29px;background:#e7e7e7"></div>
<svg style="left:259px;top:1055px" width="14" height="14" viewBox="0 0 14 14"><circle cx="7" cy="7" r="6.5" fill="#8fb0de"/><circle cx="7" cy="7" r="3.2" fill="#e7e7e7"/><rect x="6" y="0" width="2" height="5" fill="#5a7fb8"/><rect x="6" y="9" width="2" height="5" fill="#5a7fb8"/></svg>
<svg style="left:277px;top:1054px" width="19" height="19" viewBox="0 0 19 19"><path d="M1 3 L3 1 H15 L18 4 V18 H4 L1 15 Z" fill="#fff" stroke="#333" stroke-width="1"/><rect x="3" y="3" width="10" height="10" fill="#8a8a8a" stroke="#444" stroke-width="0.8"/></svg>
<div class="t" style="left:300px;top:1053px;font-size:13.8px;color:#5a5a5a;">Exercise 2 Assembly</div>
<div class="a" style="left:449px;top:1050px;width:200px;height:29px;background:#fff"></div>
<div class="a" style="left:451px;top:1076px;width:196px;height:2px;background:#1e4f8f;border-radius:1px"></div>
<svg style="left:460px;top:1054px" width="17" height="20" viewBox="0 0 17 20"><path d="M1 6 L4 4 H8 V19 H4 L1 17 Z M4 4 V17 H8 M9 3 L12 1 H16 V19 H12 L9 17 Z M12 1 V17 H16" fill="#fff" stroke="#333" stroke-width="1"/></svg>
<div class="t" style="left:482px;top:1053px;font-size:13.6px;color:#333;">Exercise 2 Part Studio</div>
<svg style="left:1888px;top:1028px" width="24" height="17" viewBox="0 0 24 17"><path d="M2.5 15 A9.5 12.5 0 0 1 21.5 15 Z" fill="none" stroke="#333" stroke-width="1.4" stroke-linejoin="round"/><path d="M6 12 Q6 5.5 12 5 Q18 5.5 18 12 Q15 8.5 12 11 Q9 8.5 6 12 Z" fill="none" stroke="#333" stroke-width="1.3"/></svg>
</body></html>
